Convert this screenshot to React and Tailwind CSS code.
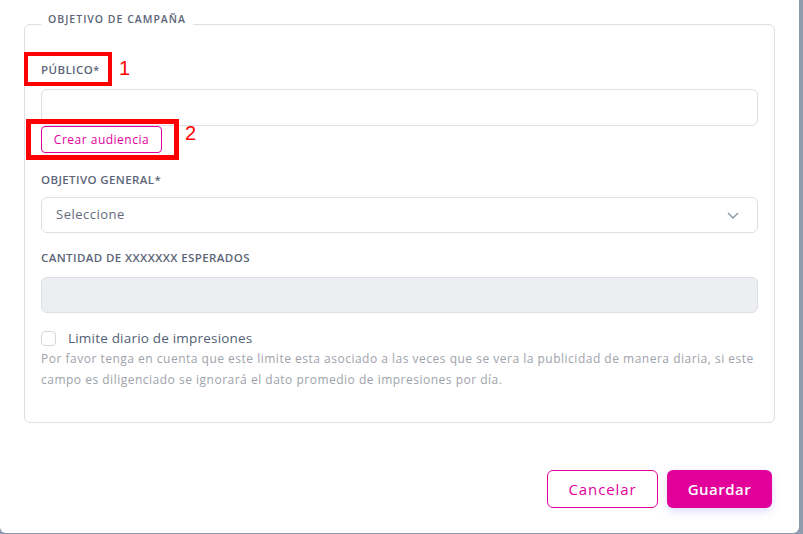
import React from 'react';

const font = { fontFamily: '"Open Sans", "Liberation Sans", sans-serif' };

function FieldLabel({ children, className = '' }) {
  return (
    <label className={`block text-[11.5px] leading-4 font-semibold uppercase tracking-[0.4px] text-[#5b6577] ${className}`}>
      {children}
    </label>
  );
}

export default function App() {
  return (
    <div className="w-[803px] h-[534px] bg-[#8e9aad] overflow-hidden" style={font}>
      <div className="relative w-[799px] h-[533px] bg-white rounded-b-md flex flex-col">
        <div className="px-6 pt-3">
          <fieldset className="border border-[#dcdfe4] rounded-md pl-4 pr-4 pb-[32px]">
            <legend className="ml-0 px-[7px] pb-[9px] text-[10.5px] leading-[15px] font-semibold uppercase tracking-[1px] text-[#5b6577]">
              Objetivo de campaña
            </legend>

            <FieldLabel className="mt-[26px]">Público*</FieldLabel>
            <input
              type="text"
              className="mt-[11px] block w-full h-[37px] border border-[#dcdfe4] rounded-md px-3 text-sm outline-none"
            />
            <button className="block w-[121px] h-[27px] border border-[#e2009b] rounded-[4px] text-[12px] tracking-[0.5px] text-[#e2009b]">
              Crear audiencia
            </button>

            <FieldLabel className="mt-[19px]">Objetivo general*</FieldLabel>
            <div className="mt-[9px] h-[36px] border border-[#dcdfe4] rounded-md flex items-center justify-between pl-[14px] pr-[18px]">
              <span className="text-[13px] tracking-[0.5px] text-[#5f6a7b]">Seleccione</span>
              <svg width="12" height="7" viewBox="0 0 12 7" fill="none">
                <polyline points="1,1 6,6 11,1" stroke="#8792a2" strokeWidth="1.3" />
              </svg>
            </div>

            <FieldLabel className="mt-[17px]">Cantidad de xxxxxxx esperados</FieldLabel>
            <div className="mt-[11px] h-[36px] bg-[#eceef1] border border-[#dcdfe4] rounded-md" />

            <div className="mt-[15px] flex items-center gap-3">
              <span className="w-[15px] h-[15px] border border-[#d3d7dd] rounded-[4px] bg-white" />
              <span className="text-[13.5px] tracking-[0.2px] text-[#525f75]">Limite diario de impresiones</span>
            </div>
            <p className="mt-0 whitespace-nowrap text-[12px] leading-[21px] tracking-[0.5px] text-[#9ea3ab]">
              Por favor tenga en cuenta que este limite esta asociado a las veces que se vera la publicidad de manera diaria, si este
              <br />
              campo es diligenciado se ignorará el dato promedio de impresiones por día.
            </p>
          </fieldset>
        </div>

        <div className="mt-auto mb-[25px] pr-[27px] flex justify-end gap-[9px]">
          <button className="w-[111px] h-[38px] border border-[#e2009b] rounded-md text-[15px] tracking-[0.9px] text-[#e2009b] bg-white">
            Cancelar
          </button>
          <button className="w-[105px] h-[38px] rounded-md text-[15px] font-semibold tracking-[0.5px] text-white bg-[#e2009b] shadow-[0_3px_8px_rgba(120,110,255,0.25)]">
            Guardar
          </button>
        </div>

        {/* annotation overlays */}
        <div className="absolute left-[24px] top-[52px] w-[88px] h-[34px] border-[4px] border-[#ff0000]" />
        <span className="absolute left-[119px] top-[56px] text-[20px] leading-6 text-[#ff0000]" style={{ fontFamily: '"Liberation Sans", sans-serif' }}>1</span>
        <div className="absolute left-[26px] top-[119px] w-[153px] h-[41px] border-[5px] border-[#ff0000]" />
        <span className="absolute left-[185px] top-[121px] text-[20px] leading-6 text-[#ff0000]" style={{ fontFamily: '"Liberation Sans", sans-serif' }}>2</span>
      </div>
    </div>
  );
}
